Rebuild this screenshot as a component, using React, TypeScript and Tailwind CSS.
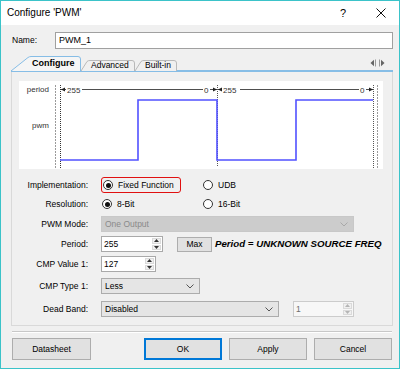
import React from "react";

const Chevron = ({ color = "#555" }: { color?: string }) => (
  <svg width="8" height="5" viewBox="0 0 8 5" className="block">
    <path d="M0.5 0.5 L4 4 L7.5 0.5" fill="none" stroke={color} strokeWidth="1" />
  </svg>
);

const Spinner = ({ muted }: { muted?: boolean }) => {
  const c = muted ? "#b5b5b5" : "#333";
  return (
    <div className="flex flex-col w-[10px] h-full py-px pr-px gap-px">
      <div className="flex-1 flex items-center justify-center bg-[#f0f0f0] border border-[#dadada]">
        <svg width="5" height="3" viewBox="0 0 5 3" className="block">
          <path d="M0 3 L2.5 0 L5 3Z" fill={c} />
        </svg>
      </div>
      <div className="flex-1 flex items-center justify-center bg-[#f0f0f0] border border-[#dadada]">
        <svg width="5" height="3" viewBox="0 0 5 3" className="block">
          <path d="M0 0 L2.5 3 L5 0Z" fill={c} />
        </svg>
      </div>
    </div>
  );
};

const Radio = ({ checked }: { checked?: boolean }) => (
  <span className="w-[10px] h-[10px] rounded-full border border-[#333] bg-white flex items-center justify-center shrink-0">
    {checked && <span className="w-[5px] h-[5px] rounded-full bg-[#111]" />}
  </span>
);

const Label = ({ children }: { children: React.ReactNode }) => (
  <div className="w-[76px] text-right shrink-0 mr-[13px]">{children}</div>
);

const Diagram = () => (
  <svg width="363" height="88" viewBox="0 0 363 88" className="block" fontFamily="Liberation Sans, Arial, sans-serif">
    <text x="30" y="11" textAnchor="end" fontSize="8" fill="#333">period</text>
    <text x="30" y="47" textAnchor="end" fontSize="8" fill="#333">pwm</text>
    <line x1="36.5" y1="4" x2="36.5" y2="88" stroke="#9a9a9a" strokeDasharray="2 1" />
    <line x1="41.5" y1="4" x2="41.5" y2="88" stroke="#333" strokeDasharray="1 1" />
    <line x1="198.5" y1="4" x2="198.5" y2="86" stroke="#555" strokeDasharray="1 1" />
    <line x1="354.5" y1="4" x2="354.5" y2="88" stroke="#555" strokeDasharray="1 1" />
    <line x1="358.5" y1="4" x2="358.5" y2="88" stroke="#9a9a9a" strokeDasharray="2 1" />
    <polyline
      points="41,79 119,79 119,19 198,19 198,79 277,79 277,19 354,19"
      fill="none"
      stroke="#5252ff"
      strokeWidth="1.6"
    />
    <g stroke="#222" strokeWidth="0.8">
      <line x1="42" y1="8.5" x2="47" y2="8.5" />
      <line x1="63" y1="8.5" x2="184" y2="8.5" />
      <line x1="191" y1="8.5" x2="198" y2="8.5" />
      <line x1="199" y1="8.5" x2="203" y2="8.5" />
      <line x1="221" y1="8.5" x2="340" y2="8.5" />
      <line x1="347" y1="8.5" x2="354" y2="8.5" />
    </g>
    <g fill="#222">
      <path d="M42 8.5 L46 6.5 L46 10.5Z" />
      <path d="M198 8.5 L194 6.5 L194 10.5Z" />
      <path d="M199 8.5 L203 6.5 L203 10.5Z" />
      <path d="M354 8.5 L350 6.5 L350 10.5Z" />
    </g>
    <g fontSize="8" fill="#333">
      <text x="48" y="11.5">255</text>
      <text x="185" y="11.5">0</text>
      <text x="204" y="11.5">255</text>
      <text x="341" y="11.5">0</text>
    </g>
  </svg>
);

export default function App() {
  return (
    <div className="w-[400px] h-[369px] border border-[#3bc3c9] bg-[#f0f0f0] flex flex-col font-['Liberation_Sans',Arial,sans-serif] text-[8.5px] text-black leading-none overflow-hidden">
      {/* Title bar */}
      <div className="h-[24px] bg-white flex items-center shrink-0">
        <span className="ml-[6px] text-[10px]">Configure 'PWM'</span>
        <span className="ml-auto mr-[30px] text-[11px]">?</span>
        <svg width="10" height="10" viewBox="0 0 10 10" className="block mr-[13px]">
          <path d="M0.5 0.5 L9.5 9.5 M9.5 0.5 L0.5 9.5" stroke="#111" strokeWidth="1" />
        </svg>
      </div>

      <div className="flex flex-col pl-[10px] pr-[6px]">
        {/* Name */}
        <div className="flex items-center mt-[7px] h-[17px]">
          <span className="ml-[1px] w-[43px]">Name:</span>
          <div className="flex-1 h-full bg-white border border-[#a0a0a0] flex items-center pl-[3px] text-[9px]">PWM_1</div>
        </div>

        {/* Tabs */}
        <div className="flex items-end h-[16px] mt-[7px] border-b-2 border-[#86bde6] relative">
          <div className="relative w-[70px] h-[14px] flex items-center">
            <svg width="70" height="15" viewBox="0 0 70 15" className="absolute left-0 top-0">
              <path d="M0 15 L17 1.5 Q18.5 0.5 20 0.5 L67 0.5 Q69.5 0.5 69.5 3 L69.5 15" fill="#f5f5f5" stroke="#86bde6" strokeWidth="1" />
            </svg>
            <span className="relative ml-[21px] font-bold text-[9px]">Configure</span>
          </div>
          <div className="relative w-[54px] h-[10px] flex items-center">
            <svg width="54" height="11" viewBox="0 0 54 11" className="absolute left-0 top-0">
              <path d="M0 11 L6 1.5 Q7 0.5 9 0.5 L51 0.5 Q53.5 0.5 53.5 3 L53.5 11" fill="#f0f0f0" stroke="#b9b9b9" strokeWidth="1" />
            </svg>
            <span className="relative ml-[10px]">Advanced</span>
          </div>
          <div className="relative w-[42px] h-[10px] flex items-center">
            <svg width="42" height="11" viewBox="0 0 42 11" className="absolute left-0 top-0">
              <path d="M0 11 L6 1.5 Q7 0.5 9 0.5 L39 0.5 Q41.5 0.5 41.5 3 L41.5 11" fill="#f0f0f0" stroke="#b9b9b9" strokeWidth="1" />
            </svg>
            <span className="relative ml-[10px]">Built-in</span>
          </div>
          <div className="ml-auto mr-[8px] mb-[3px] flex items-center gap-[3px]">
            <svg width="6" height="8" viewBox="0 0 6 8" className="block">
              <path d="M0.5 4 L4 0.8 L4 7.2Z" fill="#666" />
              <line x1="5.5" y1="0.5" x2="5.5" y2="7.5" stroke="#999" />
            </svg>
            <svg width="6" height="8" viewBox="0 0 6 8" className="block">
              <line x1="0.5" y1="0.5" x2="0.5" y2="7.5" stroke="#999" />
              <path d="M5.5 4 L2 0.8 L2 7.2Z" fill="#666" />
            </svg>
          </div>
        </div>

        {/* Panel */}
        <div className="border-x border-b border-[#d9d9d9] pt-[9px] pb-[8px] pl-[7px] pr-[9px] flex flex-col">
          <div className="bg-white h-[88px]">
            <Diagram />
          </div>

          <div className="flex flex-col -ml-[7px]">
            {/* Implementation */}
            <div className="flex items-center h-[16px] mt-[8px]">
              <Label>Implementation:</Label>
              <div className="w-[80px] h-full border border-[#e01010] rounded-[3px] flex items-center pl-[1px]">
                <Radio checked />
                <span className="ml-[5px]">Fixed Function</span>
              </div>
              <div className="ml-[22px] flex items-center">
                <Radio />
                <span className="ml-[5px]">UDB</span>
              </div>
            </div>

            {/* Resolution */}
            <div className="flex items-center h-[16px] mt-[3px]">
              <Label>Resolution:</Label>
              <div className="w-[102px] flex items-center pl-[1px]">
                <Radio checked />
                <span className="ml-[5px]">8-Bit</span>
              </div>
              <div className="flex items-center">
                <Radio />
                <span className="ml-[5px]">16-Bit</span>
              </div>
            </div>

            {/* PWM Mode */}
            <div className="flex items-center h-[16px] mt-[4px]">
              <Label>PWM Mode:</Label>
              <div className="w-[253px] h-full bg-[#cccccc] border border-[#c8c8c8] flex items-center pl-[3px] pr-[5px] text-[#8a8a8a]">
                <span>One Output</span>
                <span className="ml-auto"><Chevron color="#a8a8a8" /></span>
              </div>
            </div>

            {/* Period */}
            <div className="flex items-center h-[16px] mt-[4px]">
              <Label>Period:</Label>
              <div className="w-[62px] h-full bg-white border border-[#a9a9a9] flex items-center pl-[2px]">
                <span>255</span>
                <span className="ml-auto h-full"><Spinner /></span>
              </div>
              <div className="ml-[14px] w-[35px] h-[15px] bg-[#e1e1e1] border border-[#adadad] flex items-center justify-center">Max</div>
              <span className="ml-[3px] font-bold italic text-[9.7px] whitespace-nowrap">Period = UNKNOWN SOURCE FREQ</span>
            </div>

            {/* CMP Value 1 */}
            <div className="flex items-center h-[16px] mt-[4px]">
              <Label>CMP Value 1:</Label>
              <div className="w-[55px] h-full bg-white border border-[#a9a9a9] flex items-center pl-[2px]">
                <span>127</span>
                <span className="ml-auto h-full"><Spinner /></span>
              </div>
            </div>

            {/* CMP Type 1 */}
            <div className="flex items-center h-[16px] mt-[6px]">
              <Label>CMP Type 1:</Label>
              <div className="w-[99px] h-full bg-[#e5e5e5] border border-[#acacac] flex items-center pl-[3px] pr-[5px]">
                <span>Less</span>
                <span className="ml-auto"><Chevron /></span>
              </div>
            </div>

            {/* Dead Band */}
            <div className="flex items-center h-[16px] mt-[7px]">
              <Label>Dead Band:</Label>
              <div className="w-[178px] h-full bg-[#e5e5e5] border border-[#acacac] flex items-center pl-[3px] pr-[5px]">
                <span>Disabled</span>
                <span className="ml-auto"><Chevron /></span>
              </div>
              <div className="ml-[14px] w-[61px] h-full bg-[#f7f7f7] border border-[#cccccc] flex items-center pl-[2px] text-[#6d6d6d]">
                <span>1</span>
                <span className="ml-auto h-full"><Spinner muted /></span>
              </div>
            </div>
          </div>
        </div>

        {/* Separator */}
        <div className="mt-[5px] ml-[1px] mr-[1px] border-t border-[#c8c8c8] border-b border-b-white" />

        {/* Buttons */}
        <div className="flex items-center mt-[5px] h-[22px]">
          <div className="ml-[1px] w-[79px] h-full bg-[#e1e1e1] border border-[#adadad] flex items-center justify-center">Datasheet</div>
          <div className="ml-auto w-[78px] h-full bg-[#e1e1e1] border border-[#0078d7] shadow-[inset_0_0_0_1px_#0078d7] flex items-center justify-center">OK</div>
          <div className="ml-[7px] w-[78px] h-full bg-[#e1e1e1] border border-[#adadad] flex items-center justify-center">Apply</div>
          <div className="ml-[7px] mr-[1px] w-[78px] h-full bg-[#e1e1e1] border border-[#adadad] flex items-center justify-center">Cancel</div>
        </div>
      </div>
    </div>
  );
}
